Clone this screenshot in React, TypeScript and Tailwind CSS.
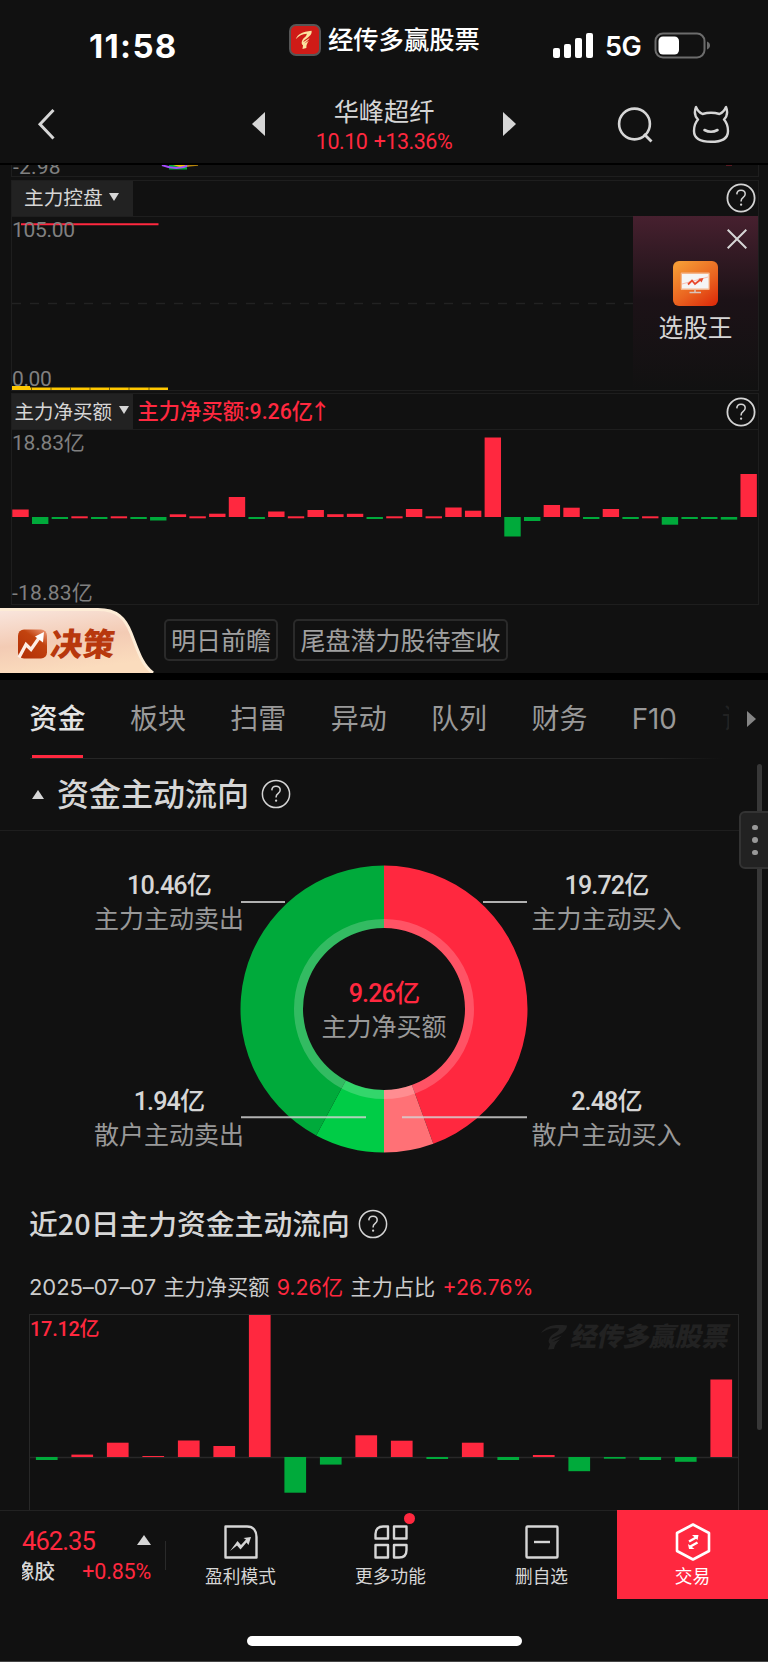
import React from "react";

const RED = "#ff283f";
const GREEN = "#00aa3b";

function Help({ className = "", thin = false }: { className?: string; thin?: boolean }) {
  return (
    <svg viewBox="0 0 30 30" className={`h-[30px] w-[30px] shrink-0 ${className}`} fill="none">
      <circle cx="15" cy="15" r="13.6" stroke="#d4d4d4" strokeWidth={thin ? 1.5 : 1.8} />
      <path
        d="M10.800 11.400c.1-2.500 1.800-4.100 4.200-4.100s4.200 1.500 4.200 3.800c0 1.700-.9 2.600-2.200 3.600-1.300 1-1.900 1.700-1.900 3.300v.5"
        stroke="#d4d4d4"
        strokeWidth={1.5}
      />
      <circle cx="15.100" cy="21.700" r="1.150" fill="#d4d4d4" />
    </svg>
  );
}

function Swoosh({ className = "", fill }: { className?: string; fill: string }) {
  return (
    <svg viewBox="0 0 27 26" className={className} fill={fill}>
      <path d="M0 9C5 2 12 0 26 1.500C26 6 22 9 16 11.500C12 13.200 10.500 14 10.500 15.500L21 11.500C18 14.500 14.500 16 11.500 18L19 15.500C16 18.500 14 20 13 25L7 25.500L9 20C6 18 8 12 14 9C16 8 18 6 18 4.500C11 3.500 6 5 0 9Z" />
    </svg>
  );
}

function StatusBar() {
  return (
    <div className="flex h-[76px] items-start">
      <div className="ml-[89px] mt-[26px] w-[200px] font-['Inter'] text-[33px] font-bold leading-10 tracking-[1.3px] text-white">
        11:58
      </div>
      <div className="mt-[24px] flex h-[32px] w-[32px] items-center justify-center rounded-[7px] border-2 border-[#565656] bg-[#cf1b17]">
        <Swoosh className="h-[18px] w-[18px] -rotate-12" fill="#fbe3a0" />
      </div>
      <div className="ml-[7px] mt-[17.500px] w-[216px] text-[25.300px] font-medium leading-10 text-white">经传多赢股票</div>
      <div className="ml-[9px] mt-[33px] flex h-[25px] items-end gap-[4px]">
        <i className="h-[10px] w-[7px] rounded-[2px] bg-white" />
        <i className="h-[14px] w-[7px] rounded-[2px] bg-white" />
        <i className="h-[20px] w-[7px] rounded-[2px] bg-white" />
        <i className="h-[25px] w-[7px] rounded-[2px] bg-white" />
      </div>
      <div className="ml-[12px] mt-[27px] w-[49px] font-['Inter'] text-[27px] font-semibold leading-10 tracking-[-0.4px] text-white">5G</div>
      <svg viewBox="0 0 58 27" className="mt-[32px] h-[27px] w-[58px]">
        <rect x="1.500" y="1.500" width="49" height="24" rx="7.500" fill="none" stroke="#6c6c6c" strokeWidth="2" />
        <rect x="4.500" y="4.500" width="20.500" height="18" rx="4.500" fill="#fff" />
        <path d="M53 9.500c2 .8 3 2.200 3 4s-1 3.200-3 4z" fill="#6c6c6c" />
      </svg>
    </div>
  );
}

function NavBar() {
  return (
    <div className="flex h-[87px] items-start">
      <svg viewBox="0 0 20 32" className="ml-[36px] mt-[32px] h-[32px] w-[20px]" fill="none">
        <path d="M17.500 2L4 16.200L17.500 30.500" stroke="#d6d6d6" strokeWidth="3" />
      </svg>
      <svg viewBox="0 0 13 24" className="ml-[196px] mt-[36px] h-[24px] w-[13px]">
        <path d="M13 0V24L0 12Z" fill="#d6d6d6" />
      </svg>
      <div className="w-[238px] pt-[17px] text-center">
        <div className="text-[25.200px] leading-[34px] text-[#d6d6d6]">华峰超纤</div>
        <div className="pt-[3px] font-['Roboto'] text-[21.500px] leading-[24px] tracking-[-0.5px] [word-spacing:1.500px] text-[#ff283f]">10.10 +13.36%</div>
      </div>
      <svg viewBox="0 0 13 24" className="mt-[36px] h-[24px] w-[13px]">
        <path d="M0 0V24L13 12Z" fill="#d6d6d6" />
      </svg>
      <svg viewBox="0 0 38 38" className="ml-[100px] mt-[30px] h-[38px] w-[38px]" fill="none" stroke="#d6d6d6">
        <circle cx="18.500" cy="18" r="15.400" strokeWidth="2.600" />
        <path d="M28 28L35.500 35.500" strokeWidth="2.800" />
      </svg>
      <svg viewBox="0 0 38 40" className="ml-[38px] mt-[28px] h-[40px] w-[38px]" fill="none" stroke="#d6d6d6" strokeWidth="2.400" strokeLinejoin="round" strokeLinecap="round">
        <path d="M4 3C2 8 2.500 12 6 15.500C2.800 19 2 24 2 27C2 35 8 37.800 19 37.800C30 37.800 36 35 36 27C36 24 35.200 19 32 15.500C35.500 12 36 8 34 3C32.500 6.500 31 8.500 27.500 10C22 8.300 16 8.300 10.500 10C7 8.500 5.500 6.500 4 3Z" />
        <path d="M12.500 26Q19 29.500 25.500 26" strokeWidth="2.600" />
      </svg>
    </div>
  );
}

function Caret() {
  return (
    <svg viewBox="0 0 10 8" className="h-[8px] w-[10px] shrink-0">
      <path d="M0 0H10L5 8Z" fill="#d6d6d6" />
    </svg>
  );
}

const flow: number[] = [
  7.5, -7, -2, 1, -2, 1, -2, -3.5, 2.7, 1.4, 3.3, 20, -2, 5.5, 1.4, 7, 2.8, 3.2, -2, 1.4, 8, 1, 9.5, 6.3, 79.5, -19.5, -4,
  12, 9.3, -2, 8, -2, 1.4, -7.7, -2, -2, -2.6, 43,
];

const twenty: number[] = [-3, 2.4, 14.3, 1, 16.5, 11, 143, -35.7, -7.6, 21.7, 16.3, -2, 14.3, -3, 2, -14.2, -1.7, -3, -4.8, 77.5];

function Indicators() {
  return (
    <div className="flex flex-col bg-[#111111]">
      <div className="relative ml-[11px] h-[12px] w-[748px] overflow-hidden border-x border-b border-[#1e1e1e]">
        <div className="absolute bottom-[-3px] left-px font-['Roboto'] text-[21px] leading-6 tracking-[0.2px] text-[#808080]">-2.98</div>
        <svg viewBox="0 0 748 12" className="absolute left-[-1px] top-0 h-[12px] w-[748px]">
          <path d="M158 0h18v4.500h-18z" fill={GREEN} />
          <path d="M162 0h14l-6 2.500z" fill="#f5c400" />
          <path d="M151 0Q166 6 178 0" stroke="#a64dff" strokeWidth="2" fill="none" />
          <path d="M176 1l11-1" stroke="#b8860b" strokeWidth="1.500" />
          <path d="M715 0h6v1h-6z" fill="#5a1a22" />
        </svg>
      </div>

      <div className="ml-[11px] mt-[3px] flex h-[36px] w-[748px] items-center border border-b-0 border-[#1e1e1e]">
        <div className="flex h-[36px] w-[121px] items-center bg-[#222222] pl-[12px] text-[19.700px] leading-[34px] text-[#d6d6d6]">
          <span className="-mt-[3px]">主力控盘</span>
          <span className="-mt-[4px] pl-[6px]"><Caret /></span>
        </div>
        <Help className="-mt-px ml-auto mr-[2px]" />
      </div>
      <div className="relative ml-[11px] h-[175px] w-[748px] border border-[#1e1e1e]">
        <svg viewBox="0 0 746 173" className="h-[173px] w-[746px]">
          <path d="M0 86.500H746" stroke="#222" strokeWidth="1.300" strokeDasharray="9 9" />
          <path d="M0 171.800H156" stroke="#ffc800" strokeWidth="2.400" />
          <path d="M0 169H18V173H0z" fill="#ffc800" />
          <path d="M19.500 170v3M39 170v3M58.500 170v3M78 170v3M97.500 170v3M117 170v3M137 170v3" stroke="#5c4a05" strokeWidth=".8" />
          <path d="M9 7.300H146.500" stroke={RED} strokeWidth="2" />
        </svg>
        <div className="absolute left-0 top-[1px] font-['Roboto'] text-[21px] leading-6 tracking-[-0.300px] text-[#808080]">105.00</div>
        <div className="absolute bottom-[-1px] left-0 font-['Roboto'] text-[21px] leading-6 tracking-[-0.4px] text-[#808080]">0.00</div>
        <div className="absolute right-0 top-[-1px] flex h-[174px] w-[125px] flex-col items-center bg-linear-to-b from-[#47202f] via-[#1c1217] via-[48%] to-[#111111]">
          <svg viewBox="0 0 20 20" className="ml-[83px] mt-[13px] h-[20px] w-[20px]">
            <path d="M.7 .7L19.300 19.300M19.300 .7L.7 19.300" stroke="#d6d6d6" strokeWidth="2" />
          </svg>
          <svg viewBox="0 0 45 45" className="mt-[12px] h-[45px] w-[45px]">
            <defs>
              <linearGradient id="app" x1="0.200" y1="0" x2="0.900" y2="1">
                <stop offset="0" stopColor="#f59a35" />
                <stop offset=".55" stopColor="#ea6420" />
                <stop offset="1" stopColor="#dc2c0a" />
              </linearGradient>
            </defs>
            <rect width="45" height="45" rx="6" fill="url(#app)" />
            <rect x="7.700" y="11.500" width="29" height="17.500" rx="1" fill="#f4b58b" />
            <rect x="9" y="13" width="26.500" height="14.500" fill="#f5f5f5" />
            <path d="M9 23L35 16" stroke="#f5b0a0" strokeWidth=".8" />
            <path d="M15 23.500L19 19.500L22 23L27 19" stroke="#e8472a" strokeWidth="1.800" fill="none" />
            <path d="M25.500 17.800L30.500 17L28.500 21.500Z" fill="#e8472a" />
            <path d="M22 29v2.500M16.500 31.500h11.500" stroke="#d9c4bb" strokeWidth="1.500" />
          </svg>
          <div className="pt-[2px] text-[24.700px] leading-[36px] text-[#d6d6d6]">选股王</div>
        </div>
      </div>

      <div className="ml-[11px] mt-[2px] flex h-[36px] w-[748px] items-center border border-b-0 border-[#1e1e1e]">
        <div className="flex h-[35px] w-[121px] shrink-0 items-center bg-[#222222] pl-[2.500px] text-[19.500px] leading-[34px] text-[#d6d6d6]">
          <span className="-mt-[2px]">主力净买额</span>
          <span className="-mt-[3px] pl-[6.500px]"><Caret /></span>
        </div>
        <div className="flex pl-[4.500px] pt-px font-['Roboto','Noto_Sans_CJK_SC'] text-[21.300px] font-medium leading-[34px] text-[#ff283f]">
          主力净买额:9.26亿
          <span className="flex w-[14px] justify-center">↑</span>
        </div>
        <Help className="ml-auto mr-[2px]" />
      </div>
      <div className="relative ml-[11px] h-[176px] w-[748px] border border-[#1e1e1e]">
        <svg viewBox="0 0 746 174" className="h-[174px] w-[746px]">
          {flow.map((v, i) => (
            <rect
              key={i}
              x={0.3 + i * 19.68}
              y={v > 0 ? (v < 2 ? 86.3 : 87 - v) : 87}
              width={16.4}
              height={v > 0 ? (v < 2 ? 2 : v) : -v}
              fill={v > 0 ? RED : GREEN}
            />
          ))}
        </svg>
        <div className="absolute left-0 top-[1px] font-['Roboto','Noto_Sans_CJK_SC'] text-[21px] leading-6 tracking-[-0.2px] text-[#808080]">18.83亿</div>
        <div className="absolute bottom-[-1px] left-0 font-['Roboto','Noto_Sans_CJK_SC'] text-[21px] leading-6 tracking-[0.2px] text-[#808080]">-18.83亿</div>
      </div>
    </div>
  );
}

function Ticker() {
  return (
    <div className="flex h-[68px] items-start">
      <div className="relative mt-[3px] h-[65px] w-[164px]">
        <svg viewBox="0 0 164 65" className="h-[65px] w-[164px]">
          <defs>
            <linearGradient id="tab" x1="0" y1="0" x2="0.300" y2="1">
              <stop offset="0" stopColor="#f9e6de" />
              <stop offset=".55" stopColor="#f3cbb4" />
              <stop offset="1" stopColor="#fbdcbd" />
            </linearGradient>
            <linearGradient id="badge" x1="1" y1="0" x2="0.300" y2="1">
              <stop offset="0" stopColor="#f0a080" />
              <stop offset=".4" stopColor="#c2430f" />
              <stop offset="1" stopColor="#b43208" />
            </linearGradient>
          </defs>
          <path d="M0 1.500H98C117 1.500 125 10 131 25C138 43 142 57 153 65H0Z" fill="url(#tab)" />
          <path d="M0 1.500H98C117 1.500 125 10 131 25C138 43 142 57 153 65" fill="none" stroke="#fdecd6" strokeWidth="3" />
          <rect x="18" y="21.500" width="29" height="29" rx="6" fill="url(#badge)" />
          <path d="M19 49.500L26 36.500L31 41.500L40 28.500" stroke="#fdeee6" strokeWidth="3.300" fill="none" />
          <path d="M35 28.500L44 24L43 34.500Z" fill="#fff" />
        </svg>
        <div className="absolute left-[51px] top-[15.500px] -skew-x-6 text-[32px] font-black leading-[36px] text-[#b8380d]">决策</div>
      </div>
      <div className="mt-[14px] h-[42px] w-[114px] rounded-[5px] border-2 border-[#2a2a2a] text-center text-[25px] leading-[36px] text-[#a0a0a0]">明日前瞻</div>
      <div className="ml-[15px] mt-[14px] h-[42px] w-[215px] rounded-[5px] border-2 border-[#2a2a2a] text-center text-[25px] leading-[36px] text-[#a0a0a0]">尾盘潜力股待查收</div>
    </div>
  );
}

function Tabs() {
  const tabs = ["板块", "扫雷", "异动", "队列", "财务"];
  return (
    <div className="flex h-[79px] pl-[29.500px]">
      <div className="relative flex h-[79px] w-[700px] overflow-hidden">
        <div className="w-[100.400px] shrink-0 text-[28px] font-medium leading-[74px] text-[#e4e4e4]">
          资金
          <div className="relative mt-[1px] ml-[2.500px] h-[4px] w-[51px] bg-[#ff283f]" />
        </div>
        {tabs.map((t) => (
          <div key={t} className="w-[100.400px] shrink-0 text-[28px] leading-[74px] text-[#999999]">{t}</div>
        ))}
        <div className="w-[90px] shrink-0 font-['Inter'] text-[27.800px] leading-[79px] tracking-[-0.2px] text-[#999999]">F10</div>
        <div className="w-[7px] shrink-0 overflow-hidden text-[28px] leading-[74px] text-[#222222]">诊</div>
        <div className="absolute bottom-0 left-0 h-px w-[692px] bg-linear-to-r from-[#262626] via-[#262626] via-[90%] to-[#111111]" />
      </div>
      <svg viewBox="0 0 9 16" className="ml-[17.500px] mt-[31px] h-[16px] w-[9px]">
        <path d="M0 0L9 8L0 16Z" fill="#858585" />
      </svg>
    </div>
  );
}

function Amount({ value, label, className, tone }: { value: string; label: string; className: string; tone: string }) {
  return (
    <div className={`absolute w-[160px] text-center ${className}`}>
      <div className={`font-['Roboto','Noto_Sans_CJK_SC'] text-[25.200px] font-medium leading-[34px] tracking-[-0.9px] ${tone}`}>{value}</div>
      <div className="-mt-[3px] text-[25px] leading-[34px] text-[#999999]">{label}</div>
    </div>
  );
}

function arc(r0: number, r1: number, a0: number, a1: number) {
  const p = (r: number, a: number) => {
    const t = (a * Math.PI) / 180;
    return `${384 + r * Math.sin(t)} ${178 - r * Math.cos(t)}`;
  };
  return `M${p(r1, a0)}A${r1} ${r1} 0 0 1 ${p(r1, a1)}L${p(r0, a1)}A${r0} ${r0} 0 0 0 ${p(r0, a0)}Z`;
}

function Donut() {
  return (
    <div className="relative h-[350px]">
      <svg viewBox="0 0 768 350" className="h-[350px] w-[768px]">
        <path d={arc(81, 143.5, 0, 159.9)} fill={RED} />
        <path d={arc(81, 143.5, 159.9, 180)} fill="#ff7176" />
        <path d={arc(81, 143.5, 180, 208.2)} fill="#00cc46" />
        <path d={arc(81, 143.5, 208.2, 360)} fill={GREEN} />
        <circle cx="384" cy="178" r="85.500" fill="none" stroke="#fff" strokeOpacity=".2" strokeWidth="9" />
        <path d="M241 71H285M483 71H527M241 286.200H366M402 286.200H527" stroke="#d4d4d4" strokeOpacity=".82" strokeWidth="2" />
      </svg>
      <Amount value="10.46亿" label="主力主动卖出" className="left-[89px] top-[38px]" tone="text-[#d6d6d6]" />
      <Amount value="19.72亿" label="主力主动买入" className="left-[526.500px] top-[38px]" tone="text-[#d6d6d6]" />
      <Amount value="1.94亿" label="散户主动卖出" className="left-[89px] top-[254px]" tone="text-[#d6d6d6]" />
      <Amount value="2.48亿" label="散户主动买入" className="left-[526.500px] top-[254px]" tone="text-[#d6d6d6]" />
      <Amount value="9.26亿" label="主力净买额" className="left-[304px] top-[146px]" tone="text-[#ff283f]" />
    </div>
  );
}

function BottomBar() {
  return (
    <div className="flex h-[89px] border-t border-[#222222] bg-[#111111]">
      <div className="flex w-[165px] flex-col pl-[22px] pt-[13px]">
        <div className="flex h-[34px] items-center">
          <span className="font-['Roboto'] text-[25.500px] leading-[34px] tracking-[-0.9px] text-[#ff283f]">462.35</span>
          <svg viewBox="0 0 14 10" className="ml-auto mr-[14px] -mt-[3px] h-[10px] w-[14px]">
            <path d="M7 0L14 10H0Z" fill="#d6d6d6" />
          </svg>
        </div>
        <div className="flex h-[28px] items-center justify-between pr-[14px]">
          <span className="-mt-[4px] flex w-[33px] justify-end overflow-hidden text-[20.500px] font-medium leading-[28px] text-[#d6d6d6]">
            <span className="shrink-0">橡胶</span>
          </span>
          <span className="font-['Roboto'] text-[21.500px] leading-[28px] tracking-[-0.200px] text-[#ff283f]">+0.85%</span>
        </div>
      </div>
      <div className="mt-[30px] h-[29px] w-px bg-[#2a2a2a]" />
      <div className="flex w-[149px] flex-col items-center pt-[14px]">
        <svg viewBox="0 0 34 34" className="h-[34px] w-[34px]" fill="none" stroke="#d6d6d6" strokeWidth="2.400">
          <path d="M1.500 1.500H23C29.500 1.500 32.500 6 32.500 12V32.500H1.500Z" strokeLinejoin="round" />
          <path d="M6 26L13.500 16L17 20L22 14.500L19.500 13L27 12L24.500 20L22.500 17.500L16.500 24.500L13 20.500Z" fill="#d6d6d6" stroke="none" />
        </svg>
        <div className="-mt-px text-[17.700px] leading-[34px] text-[#d6d6d6]">盈利模式</div>
      </div>
      <div className="flex w-[151px] flex-col items-center pt-[14px]">
        <div className="relative h-[34px]">
          <svg viewBox="0 0 34 34" className="h-[34px] w-[34px]" fill="none" stroke="#d6d6d6" strokeWidth="2.400" strokeLinejoin="round">
            <path d="M14 1.500V13.500H1.500V9C1.500 4 4.500 1.500 9 1.500Z" />
            <path d="M20 1.500H32.500V13.500H20Z" />
            <path d="M1.500 20H14V32.500H1.500Z" />
            <path d="M20 20H32.500V25C32.500 30 29.500 32.500 25 32.500H20Z" />
          </svg>
          <i className="absolute right-[-7px] top-[-12px] h-[11px] w-[11px] rounded-full bg-[#ff283f]" />
        </div>
        <div className="-mt-px text-[17.700px] leading-[34px] text-[#d6d6d6]">更多功能</div>
      </div>
      <div className="flex w-[151px] flex-col items-center pt-[14px]">
        <svg viewBox="0 0 34 34" className="h-[34px] w-[34px]" fill="none" stroke="#d6d6d6" strokeWidth="2.400">
          <rect x="1.500" y="1.500" width="31" height="31" rx="1" />
          <path d="M9 17H25" />
        </svg>
        <div className="-mt-px text-[17.700px] leading-[34px] text-[#d6d6d6]">删自选</div>
      </div>
      <div className="-mt-px flex h-[89px] w-[151px] flex-col items-center bg-[#ff283f] pt-[13px]">
        <svg viewBox="0 0 36 38" className="h-[38px] w-[36px]" fill="none" stroke="#fff">
          <path d="M18 1.500L34 10V28L18 36.500L2 28V10Z" strokeWidth="2.600" strokeLinejoin="round" />
          <path d="M14 18.500L22 14M22.500 19.500L14.500 24" strokeWidth="2.400" />
          <path d="M17 12L23.500 12L22.500 17Z M13 21L19.500 26H14Z" fill="#fff" stroke="none" />
        </svg>
        <div className="-mt-[2px] text-[17.700px] leading-[32px] text-white">交易</div>
      </div>
    </div>
  );
}

export default function App() {
  return (
    <div className="relative flex h-[1662px] w-[768px] flex-col overflow-hidden bg-[#111111] font-['Noto_Sans_CJK_SC',sans-serif]">
      <StatusBar />
      <NavBar />
      <div className="h-[2px] shrink-0 bg-black" />
      <Indicators />
      <Ticker />
      <div className="h-[7px] shrink-0 bg-black" />
      <Tabs />
      <div className="flex h-[72px] items-center border-b border-[#1e1e1e] pl-[32px]">
        <svg viewBox="0 0 12 9" className="h-[9px] w-[12px]">
          <path d="M6 0L12 9H0Z" fill="#d6d6d6" />
        </svg>
        <div className="-mt-[6px] ml-[13px] text-[32px] font-medium leading-[64px] text-[#d6d6d6]">资金主动流向</div>
        <Help className="-mt-px ml-[12px]" thin />
      </div>
      <Donut />
      <div className="flex h-[88px] items-center pl-[29px]">
        <div className="-mt-[4px] text-[28.800px] font-medium leading-[60px] text-[#d6d6d6]">近20日主力资金主动流向</div>
        <Help className="-mt-[2px] ml-[8px]" thin />
      </div>
      <div className="flex h-[45px] items-start gap-[7.300px] pl-[29px] pt-[1.500px] font-['Inter','Noto_Sans_CJK_SC'] text-[21.200px] leading-[32px] text-[#cccccc]">
        <span className="text-[22px] tracking-[-0.080px]">2025–07–07</span>
        <span>主力净买额</span>
        <span className="text-[21.400px] text-[#ff283f]">9.26亿</span>
        <span>主力占比</span>
        <span className="text-[21.400px] text-[#ff283f]">+26.76%</span>
      </div>
      <div className="relative ml-[29px] h-[196px] w-[710px] shrink-0 border border-b-0 border-[#282828]">
        <svg viewBox="0 0 708 195" className="h-[195px] w-[708px]">
          <path d="M0 142.500H708" stroke="#282828" strokeWidth="1.500" />
          {twenty.map((v, i) => (
            <rect key={i} x={5.9 + i * 35.5} y={v > 0 ? 142 - v : 142} width={21.7} height={Math.abs(v)} fill={v > 0 ? RED : GREEN} />
          ))}
        </svg>
        <div className="absolute left-0 top-0 font-['Roboto','Noto_Sans_CJK_SC'] text-[20px] font-medium leading-[28px] tracking-[-0.300px] text-[#ff283f]">17.12亿</div>
        <div className="absolute right-[8px] top-[4px] flex items-center gap-[4px] text-[#222222]">
          <Swoosh className="mt-[3px] h-[26px] w-[27px]" fill="#222222" />
          <span className="-skew-x-12 text-[26.300px] font-black leading-[32px]">经传多赢股票</span>
        </div>
      </div>
      <BottomBar />
      <div className="mx-auto mt-[37px] h-[10px] w-[275px] rounded-full bg-white" />
      <div className="mt-auto h-px bg-[#444444]" />

      <div className="absolute left-[757px] top-[764px] h-[666px] w-[5px] rounded-full bg-[#383838]" />
      <div className="absolute left-[739px] top-[811px] flex h-[58px] w-[36px] flex-col items-start justify-center gap-[7px] rounded-[6px] border-2 border-[#333333] bg-[#222222] pl-[11px]">
        <i className="h-[5.500px] w-[5.500px] rounded-full bg-[#999999]" />
        <i className="h-[5.500px] w-[5.500px] rounded-full bg-[#999999]" />
        <i className="h-[5.500px] w-[5.500px] rounded-full bg-[#999999]" />
      </div>
    </div>
  );
}
